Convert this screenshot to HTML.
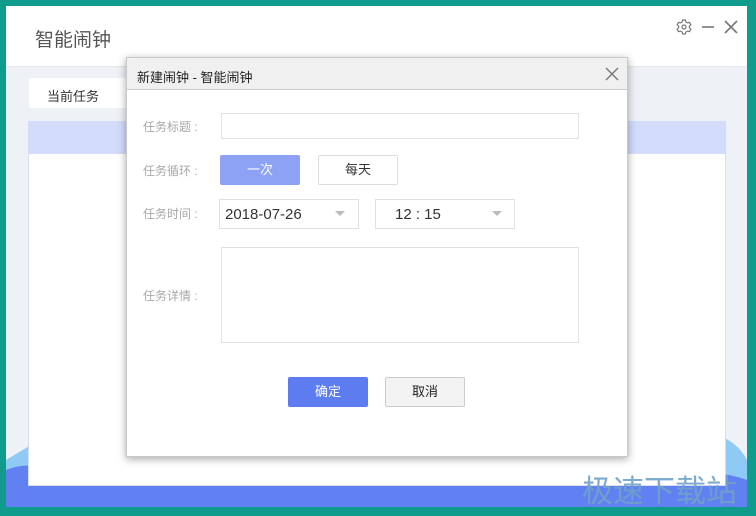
<!DOCTYPE html>
<html><head><meta charset="utf-8"><style>
*{margin:0;padding:0;box-sizing:border-box}
body{width:756px;height:516px;background:#0f9c8c;position:relative;overflow:hidden;font-family:"Liberation Sans","Noto Sans CJK SC",sans-serif}
.abs{position:absolute}
.lbl{position:absolute;left:143px;font-size:12px;color:#a8a8a8}
.box{position:absolute;background:#fff;border:1px solid #e0e0e0}
.btn{position:absolute;text-align:center;font-size:13px;border-radius:2px}
</style></head><body>
<div class="abs" style="left:6px;top:6px;width:741px;height:501px;background:#eef1f6"></div>
<svg class="abs" style="left:6px;top:420px" width="741" height="87" viewBox="0 0 741 87">
<path d="M0 40 L30 22 L30 87 L0 87Z" fill="#8fcaf5"/>
<path d="M0 50 Q15 44 30 46 L30 87 L0 87Z" fill="#6180f1"/>
<path d="M700 12 Q730 18 741 40 L741 87 L700 87Z" fill="#8fcaf5"/>
<path d="M700 52 Q725 54 741 60 L741 87 L700 87Z" fill="#6180f1"/>
<rect x="0" y="64" width="741" height="23" fill="#6180f1"/>
</svg>
<div class="abs" style="left:6px;top:6px;width:741px;height:61px;background:#fff;border-bottom:1px solid #e3e6ea"></div>
<div class="abs" style="left:35px;top:25px;font-size:19px;color:#555">智能闹钟</div>
<svg class="abs" style="left:674px;top:17px" width="66" height="20" viewBox="0 0 66 20">
<path d="M8.6 3h2.8l.5 2 1.6.9 2-.6 1.4 2.4-1.5 1.4v1.8l1.5 1.4-1.4 2.4-2-.6-1.6.9-.5 2H8.6l-.5-2-1.6-.9-2 .6-1.4-2.4 1.5-1.4V9.1L3.1 7.7l1.4-2.4 2 .6 1.6-.9z" fill="none" stroke="#777" stroke-width="1.2" stroke-linejoin="round"/>
<circle cx="10" cy="10" r="2" fill="none" stroke="#777" stroke-width="1.2"/>
<path d="M28 10h12" stroke="#777" stroke-width="1.6"/>
<path d="M51 4l12 12M63 4l-12 12" stroke="#777" stroke-width="1.6"/>
</svg>
<div class="abs" style="left:29px;top:78px;width:100px;height:30px;background:#fff;border-radius:2px"></div>
<div class="abs" style="left:47px;top:86px;font-size:13px;color:#333">当前任务</div>
<div class="abs" style="left:28px;top:121px;width:698px;height:365px;background:#fff;border:1px solid #d8def0"></div>
<div class="abs" style="left:28px;top:121px;width:698px;height:33px;background:#d3dcfb"></div>
<div class="abs" style="left:582px;top:466px;font-size:31px;color:#6fa3c9;opacity:.9">极速下载站</div>
<div class="abs" style="left:126px;top:57px;width:502px;height:400px;background:#fff;border:1px solid #c8c8c8;box-shadow:0 2px 8px rgba(0,0,0,.35)"></div>
<div class="abs" style="left:127px;top:58px;width:500px;height:32px;background:#f0f0f0;border-bottom:1px solid #d0d0d0"></div>
<div class="abs" style="left:137px;top:67px;font-size:13px;color:#222">新建闹钟 - 智能闹钟</div>
<svg class="abs" style="left:605px;top:67px" width="14" height="14"><path d="M1 1l12 12M13 1L1 13" stroke="#777" stroke-width="1.4"/></svg>
<div class="lbl" style="top:118px">任务标题 :</div>
<div class="box" style="left:221px;top:113px;width:358px;height:26px"></div>
<div class="lbl" style="top:162px">任务循环 :</div>
<div class="btn" style="left:220px;top:155px;width:80px;height:30px;line-height:30px;background:#8ea2f5;color:#fff">一次</div>
<div class="btn" style="left:318px;top:155px;width:80px;height:30px;line-height:28px;background:#fff;border:1px solid #ddd;color:#333">每天</div>
<div class="lbl" style="top:205px">任务时间 :</div>
<div class="box" style="left:219px;top:199px;width:140px;height:30px"></div>
<div class="abs" style="left:225px;top:206px;font-size:15px;color:#333">2018-07-26</div>
<div class="abs" style="left:335px;top:211px;border:5px solid transparent;border-top:5px solid #bbb"></div>
<div class="box" style="left:375px;top:199px;width:140px;height:30px"></div>
<div class="abs" style="left:395px;top:206px;font-size:15px;color:#333">12 : 15</div>
<div class="abs" style="left:492px;top:211px;border:5px solid transparent;border-top:5px solid #bbb"></div>
<div class="lbl" style="top:287px">任务详情 :</div>
<div class="box" style="left:221px;top:247px;width:358px;height:96px"></div>
<div class="btn" style="left:288px;top:377px;width:80px;height:30px;line-height:30px;background:#5c7cf0;color:#fff">确定</div>
<div class="btn" style="left:385px;top:377px;width:80px;height:30px;line-height:28px;background:#f3f3f3;border:1px solid #ccc;color:#222">取消</div>
</body></html>
